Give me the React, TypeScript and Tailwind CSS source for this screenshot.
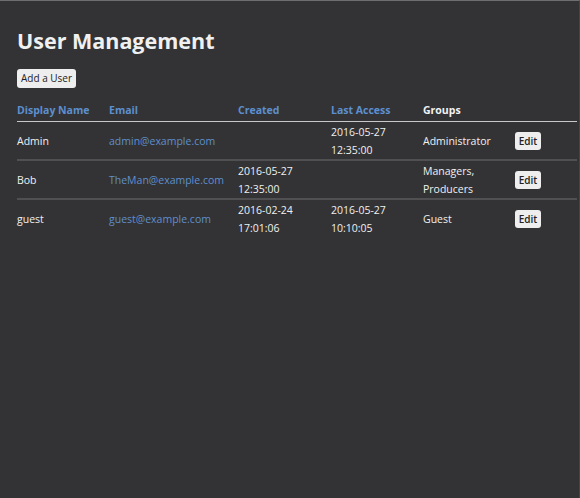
const users = [
  { name: "Admin", email: "admin@example.com", created: [], access: ["2016-05-27", "12:35:00"], groups: ["Administrator"] },
  { name: "Bob", email: "TheMan@example.com", created: ["2016-05-27", "12:35:00"], access: [], groups: ["Managers,", "Producers"] },
  { name: "guest", email: "guest@example.com", created: ["2016-02-24", "17:01:06"], access: ["2016-05-27", "10:10:05"], groups: ["Guest"] },
];

function Lines({ items }: { items: string[] }) {
  return (
    <>
      {items.map((s) => (
        <div key={s}>{s}</div>
      ))}
    </>
  );
}

export default function App() {
  return (
    <div className="min-h-[498px] bg-[#333335] border-t border-t-[#6e6e6e] border-r border-r-[#444446] pl-[17px] pr-[2px] pt-[25px] text-[#f0f0f0] font-['Open_Sans',sans-serif]">
      <h1 className="text-[21.5px] font-bold leading-[30px]">User Management</h1>
      <button className="mt-[13px] h-[19px] px-[4px] bg-[#eeeeee] text-[#222] text-[10px] leading-[19px] rounded-[3px]">
        Add a User
      </button>
      <table className="mt-[13px] w-full border-collapse text-[10.5px] leading-[18px]">
        <thead>
          <tr className="border-b border-b-[#c8c8c8] text-left font-bold">
            <th className="w-[92px] pb-[2px] text-[#5d8fcf]">Display Name</th>
            <th className="w-[129px] pb-[2px] text-[#5d8fcf]">Email</th>
            <th className="w-[93px] pb-[2px] text-[#5d8fcf]">Created</th>
            <th className="w-[92px] pb-[2px] text-[#5d8fcf]">Last Access</th>
            <th className="w-[92px] pb-[2px] text-[#f2f2f2]">Groups</th>
            <th className="pb-[2px]"></th>
          </tr>
        </thead>
        <tbody>
          {users.map((u, i) => (
            <tr key={u.name} className={i < users.length - 1 ? "h-[38px] border-b-2 border-b-[#505052]" : "h-[38px]"}>
              <td className="pt-[1px] align-middle">{u.name}</td>
              <td className="pt-[1px] align-middle text-[#5f8fcc]">{u.email}</td>
              <td className="pt-[1px] align-middle"><Lines items={u.created} /></td>
              <td className="pt-[1px] align-middle"><Lines items={u.access} /></td>
              <td className="pt-[1px] align-middle"><Lines items={u.groups} /></td>
              <td className="pt-[1px] align-middle">
                <button className="h-[18px] w-[26px] bg-[#eeeeee] text-[#222] text-[10px] font-semibold leading-[18px] rounded-[3px]">Edit</button>
              </td>
            </tr>
          ))}
        </tbody>
      </table>
    </div>
  );
}
